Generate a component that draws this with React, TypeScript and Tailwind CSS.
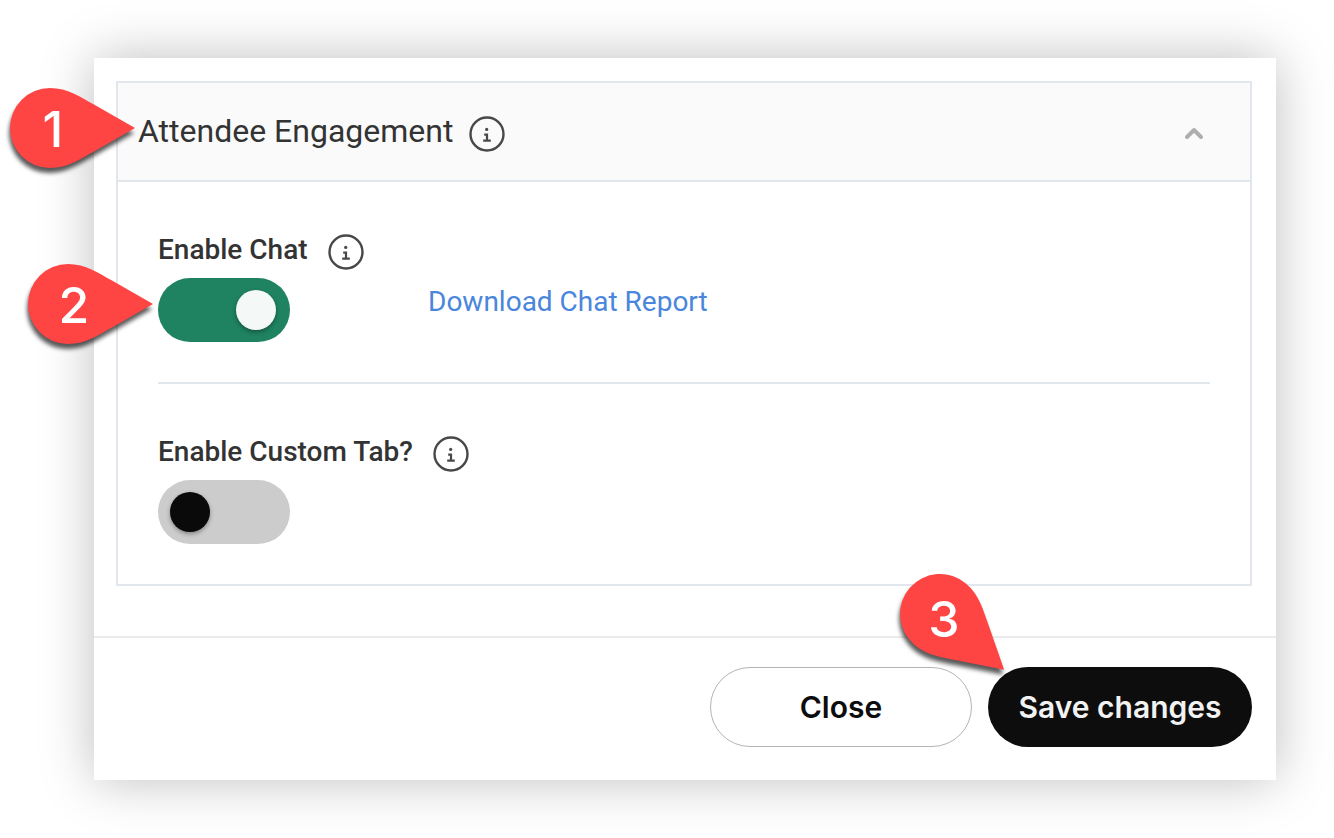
import { useState } from "react";
import clsx from "clsx";

function InfoIcon({ label }: { label: string }) {
  return (
    <button type="button" aria-label={label} className="mt-1 shrink-0 text-[#484848]">
      <svg width="36" height="36" viewBox="0 0 36 36" fill="none" stroke="currentColor" aria-hidden="true">
        <circle cx="18" cy="18" r="16.5" strokeWidth="2.4" />
        <circle cx="17.7" cy="13.4" r="1.6" fill="currentColor" stroke="none" />
        <path d="M15.2 18.6H18V24.6M14.2 24.6H21.8" strokeWidth="2.2" />
      </svg>
    </button>
  );
}

type MarkerProps = {
  step: number;
  textX: number;
  textY: number;
  angle?: number;
  className: string;
};

// The body is centred on 60,60 and points right before it is turned by angle.
function Marker({ step, textX, textY, angle = 0, className }: MarkerProps) {
  return (
    <svg
      width="160"
      height="140"
      viewBox="0 0 160 140"
      className={clsx("pointer-events-none absolute z-10 overflow-visible", className)}
    >
      <g className="drop-shadow-[-1px_5px_2px_rgba(0,0,0,0.65)]">
        <path
          d="M60 20C78 20 90 29 104 36.500L145 60L104 83.500C90 91 78 100 60 100A40 40 0 0 1 60 20Z"
          transform={`rotate(${angle} 60 60)`}
          fill="#ff4444"
        />
      </g>
      <text
        x={textX}
        y={textY}
        textAnchor="middle"
        fill="#fff"
        className="font-['Inter',sans-serif] text-[50px] font-medium"
      >
        {step}
      </text>
    </svg>
  );
}

type SettingProps = {
  id: string;
  label: string;
  defaultChecked?: boolean;
  children?: React.ReactNode;
};

function Setting({ id, label, defaultChecked, children }: SettingProps) {
  return (
    <div className="pt-12 pb-10">
      <div className="mb-2 flex h-10 items-center gap-5">
        <label htmlFor={id} className="text-[28px] leading-10 font-medium">
          {label}
        </label>
        <InfoIcon label={`About ${label}`} />
      </div>
      <div className="relative flex items-start">
        <input
          id={id}
          type="checkbox"
          role="switch"
          defaultChecked={defaultChecked}
          className="h-16 w-[132px] shrink-0 cursor-pointer appearance-none rounded-full bg-[#cccccc] p-3 before:block before:size-10 before:rounded-full before:bg-[#0a0a0a] before:shadow-[0_2px_4px_rgba(0,0,0,0.35)] checked:bg-[#1f8260] checked:before:translate-x-[66px] checked:before:bg-[#f4f8f7]"
        />
        {children}
      </div>
    </div>
  );
}

export default function App() {
  const [open, setOpen] = useState(true);

  return (
    <main className="bg-white py-[58px] pr-[58px] pl-[94px] font-['Roboto',sans-serif] text-[#333333]">
      <div className="bg-white shadow-[0_0_50px_rgba(0,0,0,0.26)]">
        <div className="pt-[23px] pr-6 pb-[50px] pl-[22px]">
          <section className="border-2 border-[#e1e7ec]">
            <header className="relative flex h-[99px] items-center gap-4 border-b-2 border-[#e1e7ec] bg-[#fafafa] pr-[46px] pl-5">
              <h2 className="pb-0.5 text-[32px] leading-10">Attendee Engagement</h2>
              <InfoIcon label="About Attendee Engagement" />
              <button
                type="button"
                aria-label="Toggle section"
                aria-expanded={open}
                onClick={() => setOpen(!open)}
                className={clsx("mt-0.5 ml-auto text-[#aeaeae]", !open && "rotate-180")}
              >
                <svg width="20" height="14" viewBox="0 0 20 14" fill="none" aria-hidden="true">
                  <path d="M3 11L10 4L17 11" stroke="currentColor" strokeWidth="4" strokeLinecap="round" strokeLinejoin="round" />
                </svg>
              </button>
              <Marker step={1} textX={63} textY={79} className="-top-[15px] -left-[128px]" />
            </header>
            {open && (
              <div className="divide-y-2 divide-[#e1e7ec] px-10">
                <Setting id="chat" label="Enable Chat" defaultChecked>
                  <a href="#report" className="ml-[138px] text-[28px] leading-[48px] text-[#4a86dc]">
                    Download Chat Report
                  </a>
                  <Marker step={2} textX={66} textY={79} className="-top-[34px] -left-[150px]" />
                </Setting>
                <Setting id="custom-tab" label="Enable Custom Tab?" />
              </div>
            )}
          </section>
        </div>
        <footer className="flex justify-end gap-4 border-t-2 border-[#ebebeb] pt-[29px] pr-6 pb-[33px] font-['Inter',sans-serif] text-[30px] font-semibold">
          <button type="button" className="h-20 w-[262px] rounded-full border border-[#b4b4b4] bg-white text-[#0d0d0d]">
            Close
          </button>
          <div className="relative">
            <button type="button" className="h-20 w-[264px] rounded-full bg-[#0d0d0d] text-[#f2f2f2]">
              Save changes
            </button>
            <Marker step={3} textX={64} textY={83} angle={41} className="-top-[113px] -left-[108px]" />
          </div>
        </footer>
      </div>
    </main>
  );
}
